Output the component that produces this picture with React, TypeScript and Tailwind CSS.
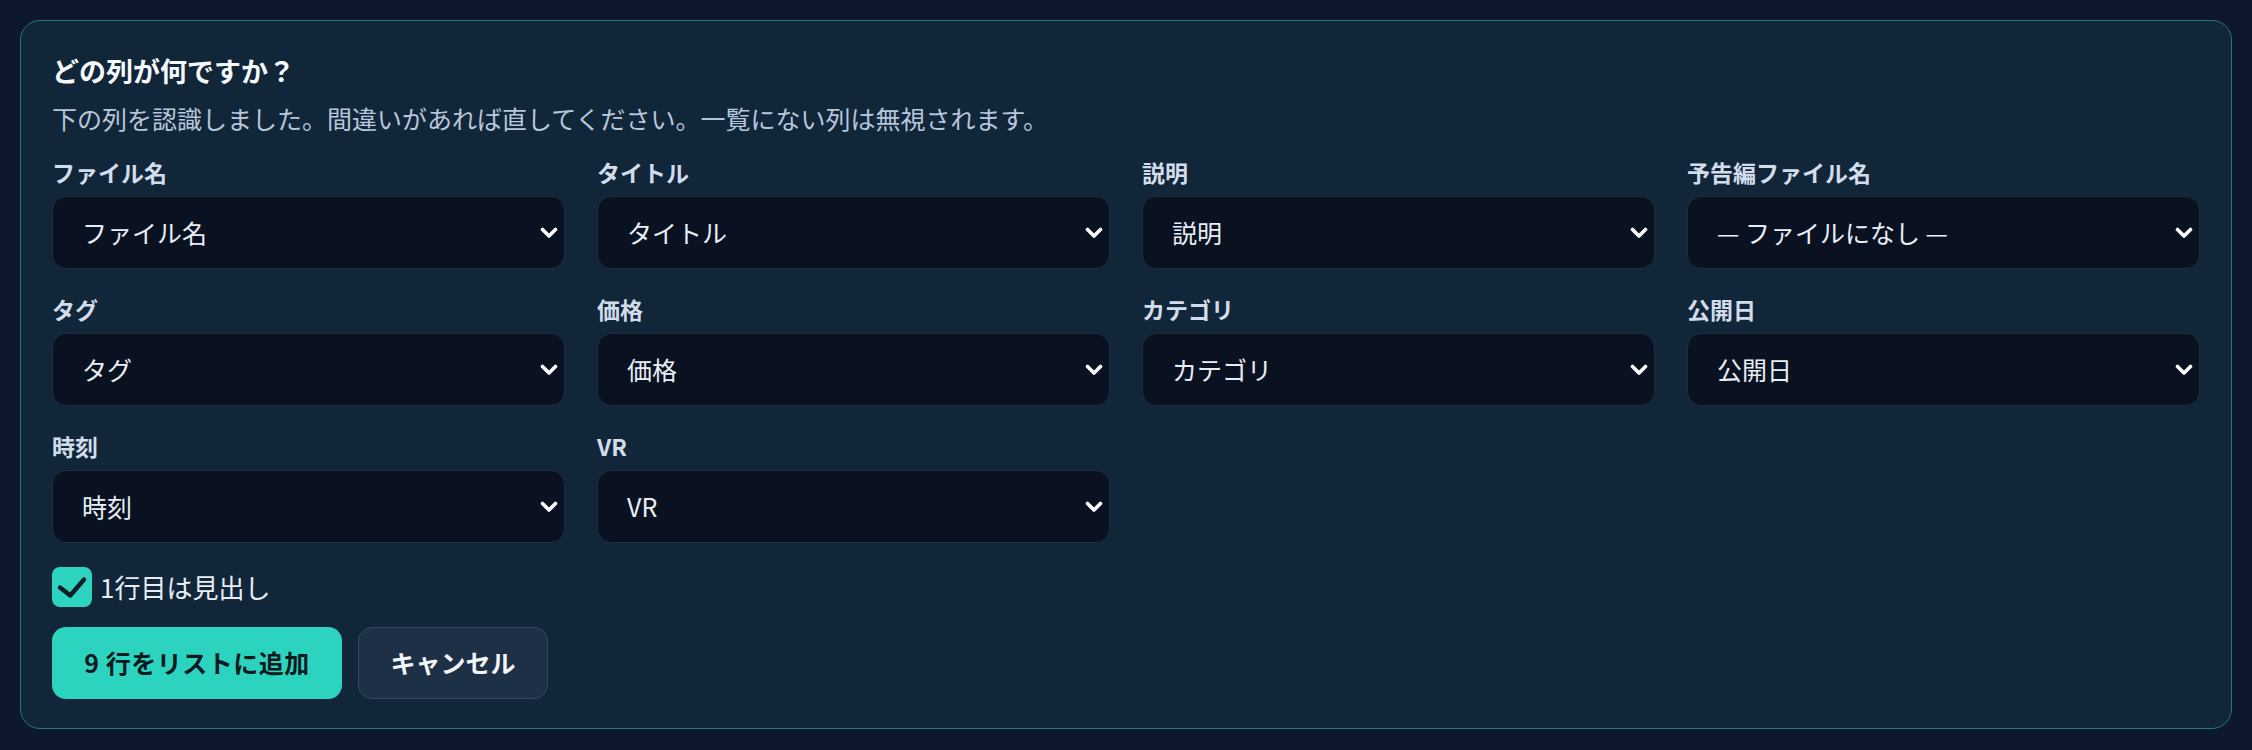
import { useState } from "react";

type Field = { label: string; value: string };

const fields: Field[] = [
  { label: "ファイル名", value: "ファイル名" },
  { label: "タイトル", value: "タイトル" },
  { label: "説明", value: "説明" },
  { label: "予告編ファイル名", value: "— ファイルになし —" },
  { label: "タグ", value: "タグ" },
  { label: "価格", value: "価格" },
  { label: "カテゴリ", value: "カテゴリ" },
  { label: "公開日", value: "公開日" },
  { label: "時刻", value: "時刻" },
  { label: "VR", value: "VR" },
];

const options = [
  "— ファイルになし —",
  "ファイル名",
  "タイトル",
  "説明",
  "タグ",
  "価格",
  "カテゴリ",
  "公開日",
  "時刻",
  "VR",
];

function Chevron() {
  return (
    <svg
      viewBox="0 0 18 12"
      className="pointer-events-none absolute right-[7px] top-1/2 h-[12px] w-[18px] -translate-y-1/2"
      fill="none"
      stroke="#ffffff"
      strokeWidth="3.6"
      strokeLinecap="round"
      strokeLinejoin="round"
    >
      <path d="M2.5 2.5 9 9l6.5-6.5" />
    </svg>
  );
}

function ColumnSelect({ field }: { field: Field }) {
  const [value, setValue] = useState(field.value);
  return (
    <label className="flex flex-col gap-[8px]">
      <span className="text-[23px] font-bold leading-[32px] text-[#d2ddeb]">{field.label}</span>
      <div className="relative">
        <select
          value={value}
          onChange={(e) => setValue(e.target.value)}
          className="h-[73px] w-full appearance-none rounded-[14px] border-[1.5px] border-[#202c3e] bg-[#0a1221] pl-[29px] pr-[40px] text-[25px] text-[#e8eef6] outline-none"
        >
          {options.map((o) => (
            <option key={o} value={o}>
              {o}
            </option>
          ))}
        </select>
        <Chevron />
      </div>
    </label>
  );
}

export default function App() {
  const [header, setHeader] = useState(true);

  return (
    <div
      className="min-h-[750px] bg-[#0d172e] p-[20px]"
      style={{ fontFamily: '"Noto Sans CJK JP", "Noto Sans", sans-serif' }}
    >
      <div className="rounded-[20px] border border-[#1e7b76] bg-[#12263a] px-[31px] pt-[30px] pb-[29px]">
        <h2 className="text-[27px] font-bold leading-[40px] text-[#f6f9fc]">どの列が何ですか？</h2>
        <p className="mt-[9px] text-[25px] leading-[36px] text-[#b7c6da]">
          下の列を認識しました。間違いがあれば直してください。一覧にない列は無視されます。
        </p>

        <div className="mt-[20px] grid grid-cols-4 gap-x-[32px] gap-y-[24px]">
          {fields.map((f) => (
            <ColumnSelect key={f.label} field={f} />
          ))}
        </div>

        <button
          type="button"
          onClick={() => setHeader(!header)}
          className="mt-[24px] flex items-center gap-[8px]"
        >
          <span
            className={
              header
                ? "flex h-[40px] w-[40px] items-center justify-center rounded-[8px] bg-[#2dd4bf]"
                : "flex h-[40px] w-[40px] items-center justify-center rounded-[8px] border-2 border-[#475569] bg-[#0a1221]"
            }
          >
            {header && (
              <svg viewBox="0 0 40 40" className="h-[40px] w-[40px]" fill="none" stroke="#101b24" strokeWidth="4.4" strokeLinecap="round" strokeLinejoin="round">
                <path d="M8 20.5 18.3 28.5 32 12.5" />
              </svg>
            )}
          </span>
          <span className="text-[26px] leading-[36px] text-[#e6edf5]">1行目は見出し</span>
        </button>

        <div className="mt-[20px] flex gap-[16px]">
          <button
            type="button"
            className="h-[72px] w-[290px] rounded-[14px] bg-[#2cd4bf] text-[25px] font-bold tracking-[0.02em] text-[#0c1a20]"
          >
            9 行をリストに追加
          </button>
          <button
            type="button"
            className="h-[72px] w-[190px] rounded-[14px] border-[1.5px] border-[#34475c] bg-[#1e3045] text-[25px] font-bold text-[#f1f5f9]"
          >
            キャンセル
          </button>
        </div>
      </div>
    </div>
  );
}
